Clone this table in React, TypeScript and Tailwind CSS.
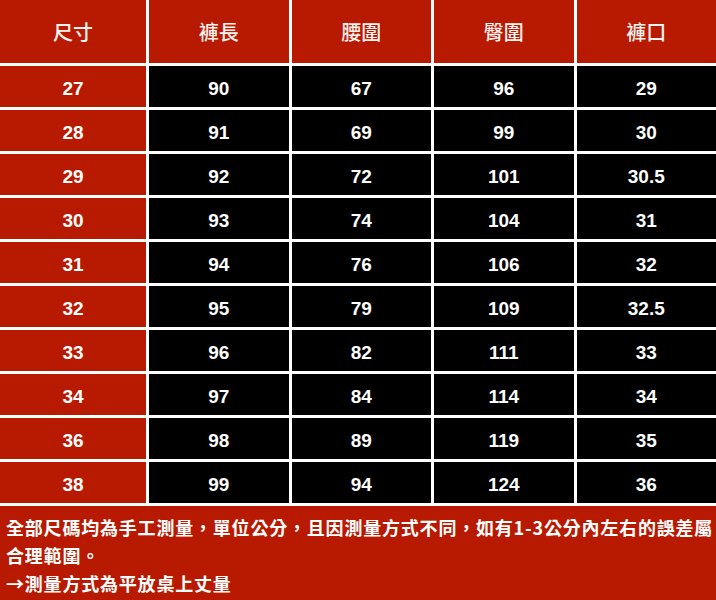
const headers = ["尺寸", "褲長", "腰圍", "臀圍", "褲口"];

const rows = [
  ["27", "90", "67", "96", "29"],
  ["28", "91", "69", "99", "30"],
  ["29", "92", "72", "101", "30.5"],
  ["30", "93", "74", "104", "31"],
  ["31", "94", "76", "106", "32"],
  ["32", "95", "79", "109", "32.5"],
  ["33", "96", "82", "111", "33"],
  ["34", "97", "84", "114", "34"],
  ["36", "98", "89", "119", "35"],
  ["38", "99", "94", "124", "36"],
];

export default function App() {
  return (
    <div className="w-[716px] h-[600px] bg-white flex flex-col overflow-hidden">
      {/* size table */}
      <div className="grid grid-cols-[146px_repeat(4,1fr)] gap-[3px] bg-white">
        {headers.map((h) => (
          <div
            key={h}
            className="h-[63px] bg-[#b71a00] flex items-center justify-center text-[20px] font-medium text-[#fdf3f0] font-['Noto_Sans_CJK_TC',sans-serif]"
          >
            {h}
          </div>
        ))}
        {rows.map((r) =>
          r.map((v, i) => (
            <div
              key={r[0] + "-" + i}
              className={
                i === 0
                  ? "h-[41px] pt-[5px] bg-[#b71a00] flex items-center justify-center text-[19px] font-bold text-white font-['Liberation_Sans',Arial,sans-serif]"
                  : "h-[41px] pt-[5px] bg-black flex items-center justify-center text-[19px] font-bold text-white font-['Liberation_Sans',Arial,sans-serif]"
              }
            >
              {v}
            </div>
          ))
        )}
      </div>

      {/* note */}
      <div className="mt-[3px] flex-1 bg-[#b71a00] px-[6px] pt-[7px] text-[18px] leading-[28px] font-bold text-white font-['Noto_Sans_CJK_TC',sans-serif] tracking-[0.8px]">
        <p className="whitespace-nowrap">
          全部尺碼均為手工測量，單位公分，且因測量方式不同，如有1-3公分內左右的誤差屬
        </p>
        <p>合理範圍。</p>
        <p>→測量方式為平放桌上丈量</p>
      </div>
    </div>
  );
}
